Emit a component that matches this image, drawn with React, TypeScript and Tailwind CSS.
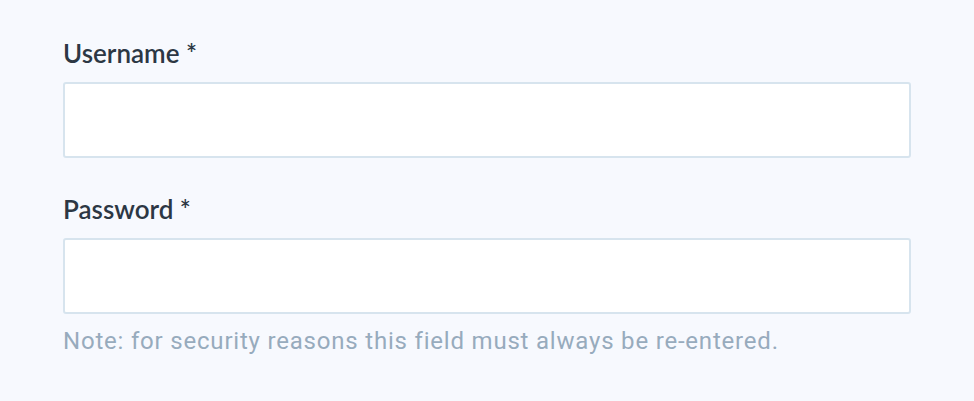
export default function App() {
  return (
    <div className="min-h-[401px] w-[974px] bg-[#f7f9fe] px-[63px] pt-[36px]">
      <div className="flex flex-col">
        <label className="text-[26px] leading-[34px] font-semibold text-[#2c3744] font-['Lato',sans-serif]">
          Username *
        </label>
        <input
          type="text"
          className="mt-[12px] h-[76px] w-[848px] rounded-[3px] border-2 border-[#d7e4ee] bg-white"
        />
      </div>
      <div className="mt-[34px] flex flex-col">
        <label className="text-[26px] leading-[34px] font-semibold text-[#2c3744] font-['Lato',sans-serif]">
          Password *
        </label>
        <input
          type="password"
          className="mt-[12px] h-[76px] w-[848px] rounded-[3px] border-2 border-[#d7e4ee] bg-white"
        />
        <p className="mt-[12px] text-[24px] leading-[30px] tracking-[0.8px] text-[#97abbd] font-['Roboto',sans-serif]">
          Note: for security reasons this field must always be re-entered.
        </p>
      </div>
    </div>
  )
}
